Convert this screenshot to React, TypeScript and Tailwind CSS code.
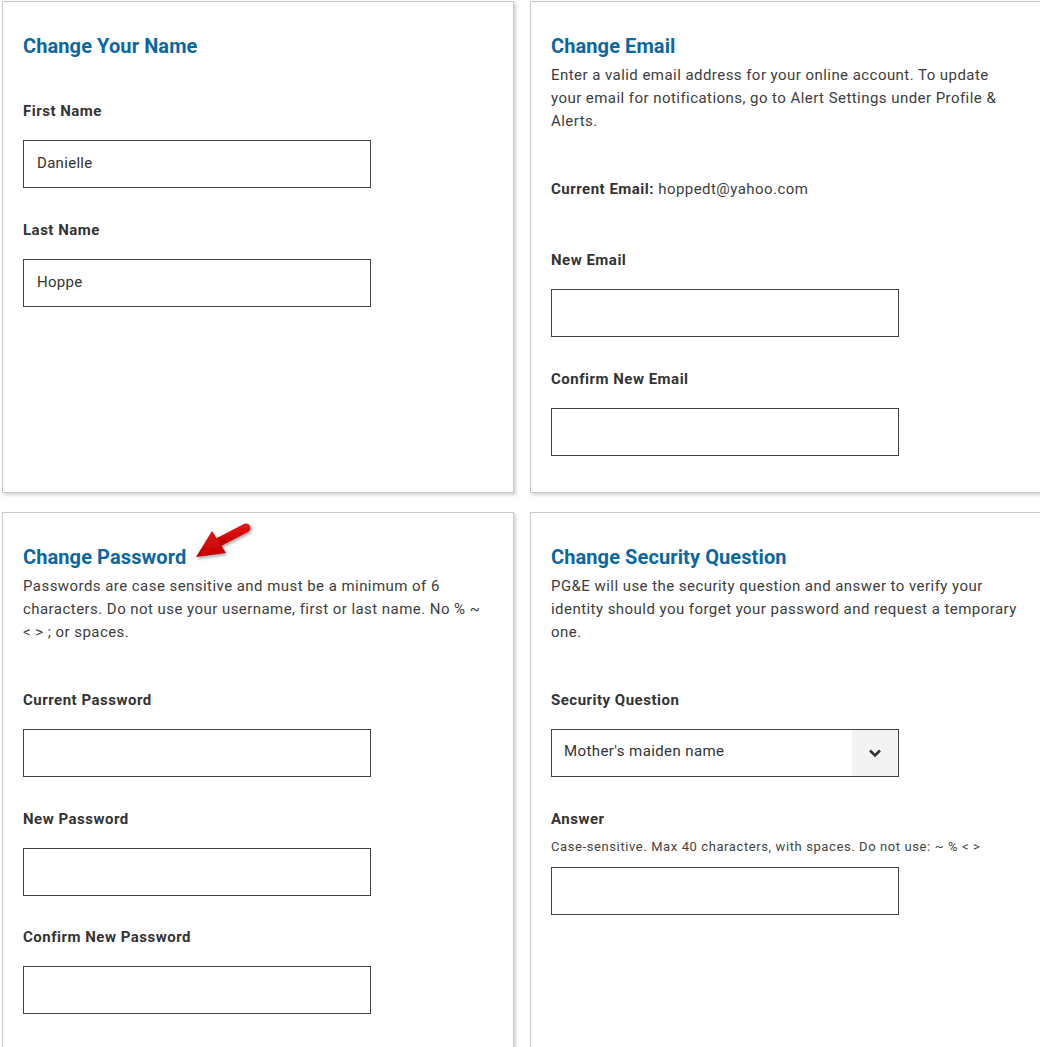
import React from "react"

const font = { fontFamily: "Roboto, 'Liberation Sans', sans-serif" }

function Card({ children, arrow }: { children: React.ReactNode; arrow?: boolean }) {
  return (
    <div className="relative border border-[#c9c9c9] bg-white pl-[20px] pr-[22px] pt-[32px] pb-[36px] shadow-[2px_2px_3px_rgba(0,0,0,0.18)]">
      {arrow && <RedArrow />}
      {children}
    </div>
  )
}

function Title({ children }: { children: React.ReactNode }) {
  return (
    <h2 className="text-[20px] leading-[24px] font-bold text-[#0b67a2] tracking-[0.1px]">{children}</h2>
  )
}

function Desc({ children, className = "" }: { children: React.ReactNode; className?: string }) {
  return (
    <p className={"mt-[6px] text-[15px] leading-[23px] text-[#3d3d3d] tracking-[0.45px] " + className}>
      {children}
    </p>
  )
}

function Label({ children }: { children: React.ReactNode }) {
  return (
    <div className="text-[15px] leading-[20px] font-bold text-[#333] tracking-[0.5px]">{children}</div>
  )
}

function TextInput({ value = "" }: { value?: string }) {
  return (
    <input
      defaultValue={value}
      className="mt-[19px] block h-[48px] w-[348px] border border-[#444] bg-white pl-[13px] pb-[3px] text-[15px] text-[#333] tracking-[0.3px] outline-none"
      style={font}
    />
  )
}

function RedArrow() {
  return (
    <svg
      className="absolute left-[186px] top-[6px]"
      width="70"
      height="52"
      viewBox="0 0 70 52"
    >
      <defs>
        <filter id="sh" x="-20%" y="-20%" width="150%" height="150%">
          <feDropShadow dx="1" dy="2" stdDeviation="1.5" floodColor="#000" floodOpacity="0.35" />
        </filter>
        <linearGradient id="rg" x1="0" y1="0" x2="0" y2="1">
          <stop offset="0" stopColor="#e21212" />
          <stop offset="1" stopColor="#c20000" />
        </linearGradient>
      </defs>
      <g filter="url(#sh)">
        <line x1="28" y1="24" x2="57" y2="9" stroke="url(#rg)" strokeWidth="9" strokeLinecap="round" />
        <polygon points="7,38 23,12 37,34" fill="url(#rg)" />
      </g>
    </svg>
  )
}

export default function App() {
  return (
    <div className="min-h-screen overflow-hidden bg-white pl-[2px] pt-[1px]" style={font}>
      <div className="grid grid-cols-[512px_512px] gap-x-[16px] gap-y-[19px]">
        <Card>
          <Title>Change Your Name</Title>
          <div className="mt-[43px]">
            <Label>First Name</Label>
            <TextInput value="Danielle" />
          </div>
          <div className="mt-[32px]">
            <Label>Last Name</Label>
            <TextInput value="Hoppe" />
          </div>
        </Card>

        <Card>
          <Title>Change Email</Title>
          <Desc>
            Enter a valid email address for your online account. To update your email for
            notifications, go to Alert Settings under Profile &amp; Alerts.
          </Desc>
          <p className="mt-[45px] text-[15px] leading-[23px] text-[#3d3d3d] tracking-[0.45px]">
            <span className="font-bold text-[#333] tracking-[0.5px]">Current Email:</span> hoppedt@yahoo.com
          </p>
          <div className="mt-[49px]">
            <Label>New Email</Label>
            <TextInput />
          </div>
          <div className="mt-[32px]">
            <Label>Confirm New Email</Label>
            <TextInput />
          </div>
        </Card>

        <Card arrow>
          <Title>Change Password</Title>
          <Desc>
            Passwords are case sensitive and must be a minimum of 6 characters. Do not use your
            username, first or last name. No % ~ &lt; &gt; ; or spaces.
          </Desc>
          <div className="mt-[46px]">
            <Label>Current Password</Label>
            <TextInput />
          </div>
          <div className="mt-[32px]">
            <Label>New Password</Label>
            <TextInput />
          </div>
          <div className="mt-[31px]">
            <Label>Confirm New Password</Label>
            <TextInput />
          </div>
        </Card>

        <Card>
          <Title>Change Security Question</Title>
          <Desc>
            PG&amp;E will use the security question and answer to verify your identity should you
            forget your password and request a temporary one.
          </Desc>
          <div className="mt-[46px]">
            <Label>Security Question</Label>
            <div className="mt-[19px] flex h-[48px] w-[348px] items-stretch border border-[#444] bg-white">
              <div className="flex flex-1 items-center pl-[12px] pb-[4px] text-[15px] text-[#333] tracking-[0.4px]">
                Mother's maiden name
              </div>
              <div className="flex w-[46px] items-center justify-center bg-[#f3f3f3]">
                <svg width="14" height="10" viewBox="0 0 14 10">
                  <path d="M2 2.5 L7 7.5 L12 2.5" fill="none" stroke="#333" strokeWidth="2.6" />
                </svg>
              </div>
            </div>
          </div>
          <div className="mt-[32px]">
            <Label>Answer</Label>
            <div className="mt-[8px] text-[13px] leading-[20px] text-[#444] tracking-[0.6px]">
              Case-sensitive. Max 40 characters, with spaces. Do not use: ~ % &lt; &gt;
            </div>
            <input
              className="mt-[10px] block h-[48px] w-[348px] border border-[#444] bg-white outline-none"
              style={font}
            />
          </div>
        </Card>
      </div>
    </div>
  )
}
